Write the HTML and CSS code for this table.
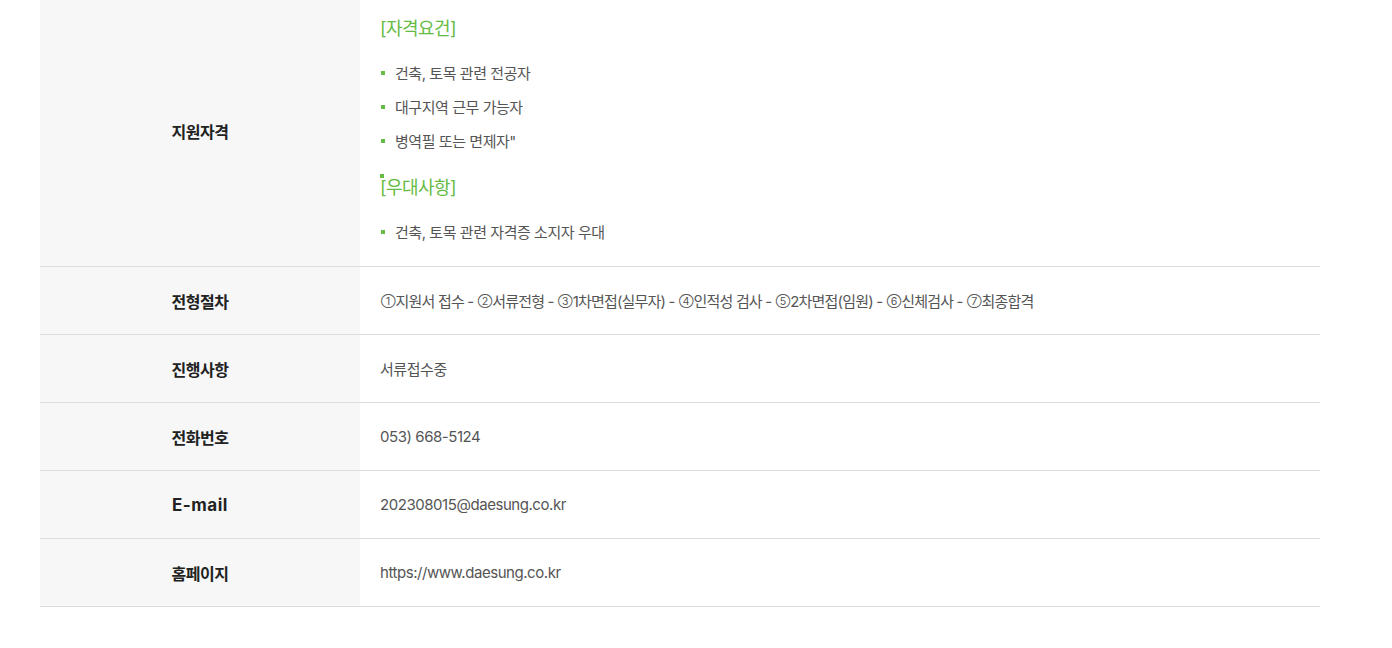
FILE: index.html
```html
<!DOCTYPE html>
<html lang="ko">
<head>
<meta charset="utf-8">
<title>채용정보</title>
<link rel="stylesheet" href="styles.css">
</head>
<body>
<div class="info-table">
  <div class="row row-tall">
    <div class="label">지원자격</div>
    <div class="value value-block">
      <h4 class="sub">[자격요건]</h4>
      <ul class="bul">
        <li>건축, 토목 관련 전공자</li>
        <li>대구지역 근무 가능자</li>
        <li>병역필 또는 면제자"</li>
        <li class="li-head"><h4 class="sub">[우대사항]</h4></li>
      </ul>
      <ul class="bul bul-last">
        <li>건축, 토목 관련 자격증 소지자 우대</li>
      </ul>
    </div>
  </div>
  <div class="row">
    <div class="label">전형절차</div>
    <div class="value value-steps"><span><span class="num">①</span>지원서 접수 - <span class="num">②</span>서류전형 - <span class="num">③</span>1차면접(실무자) - <span class="num">④</span>인적성 검사 - <span class="num">⑤</span>2차면접(임원) - <span class="num">⑥</span>신체검사 - <span class="num">⑦</span>최종합격</span></div>
  </div>
  <div class="row">
    <div class="label">진행사항</div>
    <div class="value">서류접수중</div>
  </div>
  <div class="row">
    <div class="label">전화번호</div>
    <div class="value">053) 668-5124</div>
  </div>
  <div class="row">
    <div class="label label-en">E-mail</div>
    <div class="value">202308015@daesung.co.kr</div>
  </div>
  <div class="row">
    <div class="label">홈페이지</div>
    <div class="value">https://www.daesung.co.kr</div>
  </div>
</div>
</body>
</html>
```
FILE: styles.css
```css
html, body {
  margin: 0;
  padding: 0;
  background: #fff;
}
body {
  font-family: Inter, "Noto Sans CJK KR", sans-serif;
}
.info-table {
  margin: -4px 40px 0;
  width: 1280px;
}
.row {
  display: flex;
  border-bottom: 1px solid #dddddd;
  min-height: 67px;
}
.label {
  width: 320px;
  flex: 0 0 320px;
  background: #f7f7f7;
  display: flex;
  align-items: center;
  justify-content: center;
  font-size: 16px;
  font-weight: 700;
  color: #222;
  letter-spacing: -0.03em;
}
.label-en {
  font-size: 17px;
  letter-spacing: 0.03em;
}
.value {
  flex: 1;
  display: flex;
  align-items: center;
  padding: 0 20px;
  font-size: 15px;
  color: #555;
  letter-spacing: -0.03em;
}
.value-steps {
  letter-spacing: -0.055em;
}
.num {
  font-size: 10.5px;
  letter-spacing: 0;
  vertical-align: 2px;
  padding-left: 1px;
}
.value-block {
  display: block;
  padding: 19px 20px 21px;
}
.sub {
  margin: 0;
  font-size: 18px;
  font-weight: 400;
  line-height: 28px;
  color: #66bb44;
  letter-spacing: -0.03em;
}
.bul {
  list-style: none;
  margin: 19px 0 0;
  padding: 0;
}
.bul li {
  position: relative;
  padding-left: 15px;
  line-height: 24px;
  margin-top: 10px;
}
.bul li:first-child {
  margin-top: 0;
}
.bul li::before {
  content: "";
  position: absolute;
  left: 1px;
  top: 9px;
  width: 4px;
  height: 4px;
  background: #66bb44;
}
.bul li.li-head {
  padding-left: 0;
  margin-top: 20px;
}
.bul li.li-head::before {
  left: 0;
  top: 0;
}
.bul-last {
  margin-top: 19px;
}
```
